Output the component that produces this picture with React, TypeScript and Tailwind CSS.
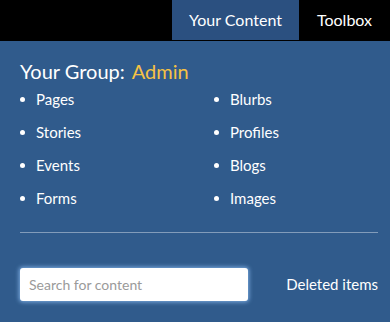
const left = ['Pages', 'Stories', 'Events', 'Forms'];
const right = ['Blurbs', 'Profiles', 'Blogs', 'Images'];

function Item({ label }: { label: string }) {
  return (
    <li className="flex items-center h-[33px]">
      <span className="w-[5px] h-[5px] rounded-full bg-white mr-[11px]" />
      <span className="text-[15px]">{label}</span>
    </li>
  );
}

export default function App() {
  return (
    <div className="w-[390px] h-[322px] flex flex-col bg-black text-white overflow-hidden" style={{ fontFamily: 'Lato, "Open Sans", sans-serif' }}>
      <header className="h-[41px] flex justify-end items-start shrink-0">
        <div className="w-[127px] h-[40px] bg-[#2b5080] flex items-center justify-center text-[16px]">Your Content</div>
        <div className="w-[91px] h-[40px] flex items-center justify-center text-[16px]">Toolbox</div>
      </header>
      <main className="flex-1 bg-[#305b8c] pl-[20px] pr-[12px] flex flex-col">
        <h2 className="mt-[18px] text-[20px] leading-[24px]">
          Your Group:<span className="ml-[7px] text-[#f5c244]">Admin</span>
        </h2>
        <div className="grid grid-cols-[194px_1fr]">
          <ul>{left.map((l) => <Item key={l} label={l} />)}</ul>
          <ul>{right.map((l) => <Item key={l} label={l} />)}</ul>
        </div>
        <hr className="mt-[17px] border-0 border-t border-white/40" />
        <div className="mt-[35px] flex items-center justify-between">
          <input
            className="w-[228px] h-[33px] rounded-[3px] bg-white px-[9px] text-[14px] text-gray-700 placeholder:text-[#9a9a9a] outline-none shadow-[0_0_4px_1px_rgba(150,200,255,0.75)]"
            placeholder="Search for content"
            autoFocus
          />
          <span className="text-[15px]">Deleted items</span>
        </div>
      </main>
    </div>
  );
}
